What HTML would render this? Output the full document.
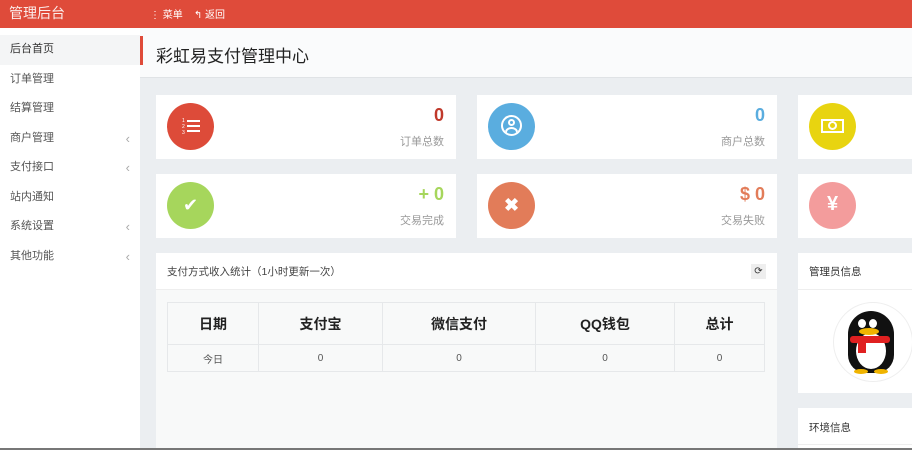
<!DOCTYPE html>
<html><head><meta charset="utf-8"><style>
*{margin:0;padding:0;box-sizing:border-box}
html,body{width:912px;height:450px;overflow:hidden}
body{background:#ebeef1;font-family:"Liberation Sans","Noto Sans CJK SC",sans-serif;position:relative;color:#333}
.hdr{position:absolute;left:0;top:0;width:912px;height:28px;background:#df4b3a;color:#fff}
.abs{position:absolute}
.side{position:absolute;left:0;top:28px;width:140px;height:422px;background:#fff}
.side div{height:29.5px;line-height:29.5px;padding-left:10px;font-size:11px;color:#555;position:relative}
.side div.act{background:#f4f5f6;color:#333}
.side .ch{position:absolute;right:10px;top:0;color:#aaa;font-size:13px}
.title{position:absolute;left:140px;top:28px;width:772px;height:50px;background:#fafbfc;border-bottom:1px solid #e0e3e6}
.card{position:absolute;background:#fff;height:64px}
.circ{position:absolute;left:11px;top:8px;width:47px;height:47px;border-radius:50%}
.num{position:absolute;right:12px;top:10px;font-size:18px;font-weight:bold}
.lbl{position:absolute;right:12px;top:38px;font-size:11px;color:#999}
table{border-collapse:collapse;position:absolute;left:11px;top:49px;width:598px}
td,th{border:1px solid #e6e8ea;text-align:center}
th{height:42px;font-size:14px;font-weight:bold;color:#222}
td{height:27px;font-size:10px;color:#555}
</style></head><body>
<div class="hdr">
<div class="abs" style="left:9px;top:3px;font-size:14px;opacity:.9">管理后台</div>
<div class="abs" style="left:150px;top:6px;font-size:10px">⋮ 菜单 &nbsp;&nbsp; ↰ 返回</div>
</div>
<div class="side" style="padding-top:7px">
<div class="act">后台首页</div><div>订单管理</div><div>结算管理</div>
<div>商户管理<span class="ch">‹</span></div><div>支付接口<span class="ch">‹</span></div><div>站内通知</div>
<div>系统设置<span class="ch">‹</span></div><div>其他功能<span class="ch">‹</span></div>
</div>
<div class="title"><div class="abs" style="left:0;top:8px;width:3px;height:29px;background:#df4b3a"></div><div class="abs" style="left:16px;top:14px;font-size:17px;color:#222">彩虹易支付管理中心</div></div>

<div class="card" style="left:156px;top:95px;width:300px"><div class="circ" style="background:#dd4b39">
<div class="abs" style="left:15px;top:15px;width:4px;height:18px;color:#fff;font-size:5px;line-height:6px">1<br>2<br>3</div>
<div class="abs" style="left:20px;top:17px;width:13px;height:2px;background:#fff;box-shadow:0 5px 0 #fff,0 10px 0 #fff"></div></div><div class="num" style="color:#c0392b">0</div><div class="lbl">订单总数</div></div>
<div class="card" style="left:477px;top:95px;width:300px"><div class="circ" style="background:#5aaddf"><div class="abs" style="left:13px;top:12px;width:21px;height:21px;border:2px solid #fff;border-radius:50%;overflow:hidden"><div class="abs" style="left:5px;top:2px;width:7px;height:7px;border:2px solid #fff;border-radius:50%"></div><div class="abs" style="left:2px;top:10px;width:13px;height:10px;border:2px solid #fff;border-radius:50%"></div></div></div><div class="num" style="color:#5aaddf">0</div><div class="lbl">商户总数</div></div>
<div class="card" style="left:798px;top:95px;width:120px"><div class="circ" style="background:#e8d410"><div class="abs" style="left:12px;top:16px;width:23px;height:14px;border:2px solid #fff"></div><div class="abs" style="left:19px;top:18px;width:9px;height:9px;border:2px solid #fff;border-radius:50%"></div></div></div>
<div class="card" style="left:156px;top:174px;width:300px"><div class="circ" style="background:#a6d65c;color:#fff;font-size:18px;text-align:center;line-height:47px">✔</div><div class="num" style="color:#a6d65c">+ 0</div><div class="lbl">交易完成</div></div>
<div class="card" style="left:477px;top:174px;width:300px"><div class="circ" style="background:#e27c59;color:#fff;font-size:18px;text-align:center;line-height:47px;font-weight:bold">✖</div><div class="num" style="color:#e27c59">$ 0</div><div class="lbl">交易失败</div></div>
<div class="card" style="left:798px;top:174px;width:120px"><div class="circ" style="background:#f39c9c;color:#fff;font-size:20px;text-align:center;line-height:45px;font-weight:bold">¥</div></div>

<div class="abs" style="left:156px;top:253px;width:621px;height:200px;background:#f8f9f9">
<div style="height:37px;background:#fff;border-bottom:1px solid #eee;position:relative">
<div class="abs" style="left:11px;top:11px;font-size:10.5px;color:#444">支付方式收入统计（1小时更新一次）</div>
<div class="abs" style="left:595px;top:11px;width:15px;height:15px;background:#eee;font-size:10px;text-align:center;line-height:15px">⟳</div>
</div>
<table><tr><th style="width:91px">日期</th><th style="width:124px">支付宝</th><th style="width:153px">微信支付</th><th style="width:139px">QQ钱包</th><th>总计</th></tr>
<tr><td>今日</td><td>0</td><td>0</td><td>0</td><td>0</td></tr></table>
</div>

<div class="abs" style="left:798px;top:253px;width:120px;height:140px;background:#fff">
<div style="height:37px;border-bottom:1px solid #eee;padding:11px 0 0 11px;font-size:10.5px;color:#333">管理员信息</div>
<div class="abs" style="left:35px;top:49px;width:80px;height:80px;border-radius:50%;border:1px solid #eee;overflow:hidden">
<div class="abs" style="left:14px;top:8px;width:46px;height:62px;background:#111;border-radius:23px 23px 18px 18px"></div>
<div class="abs" style="left:22px;top:30px;width:30px;height:36px;background:#fff;border-radius:50%"></div>
<div class="abs" style="left:24px;top:16px;width:8px;height:9px;background:#fff;border-radius:50%"></div>
<div class="abs" style="left:35px;top:16px;width:8px;height:9px;background:#fff;border-radius:50%"></div>
<div class="abs" style="left:25px;top:25px;width:20px;height:7px;background:#f0b400;border-radius:50%"></div>
<div class="abs" style="left:16px;top:33px;width:40px;height:7px;background:#e02020;border-radius:3px"></div>
<div class="abs" style="left:24px;top:38px;width:8px;height:12px;background:#e02020"></div>
<div class="abs" style="left:20px;top:66px;width:14px;height:5px;background:#f0b400;border-radius:50%"></div>
<div class="abs" style="left:40px;top:66px;width:14px;height:5px;background:#f0b400;border-radius:50%"></div>
</div>
</div>
<div class="abs" style="left:798px;top:408px;width:120px;height:42px;background:#fff">
<div style="height:37px;border-bottom:1px solid #eee;padding:12px 0 0 11px;font-size:10.5px;color:#333">环境信息</div>
</div>
<div class="abs" style="left:0;top:448px;width:912px;height:2px;background:#777"></div>
</body></html>
